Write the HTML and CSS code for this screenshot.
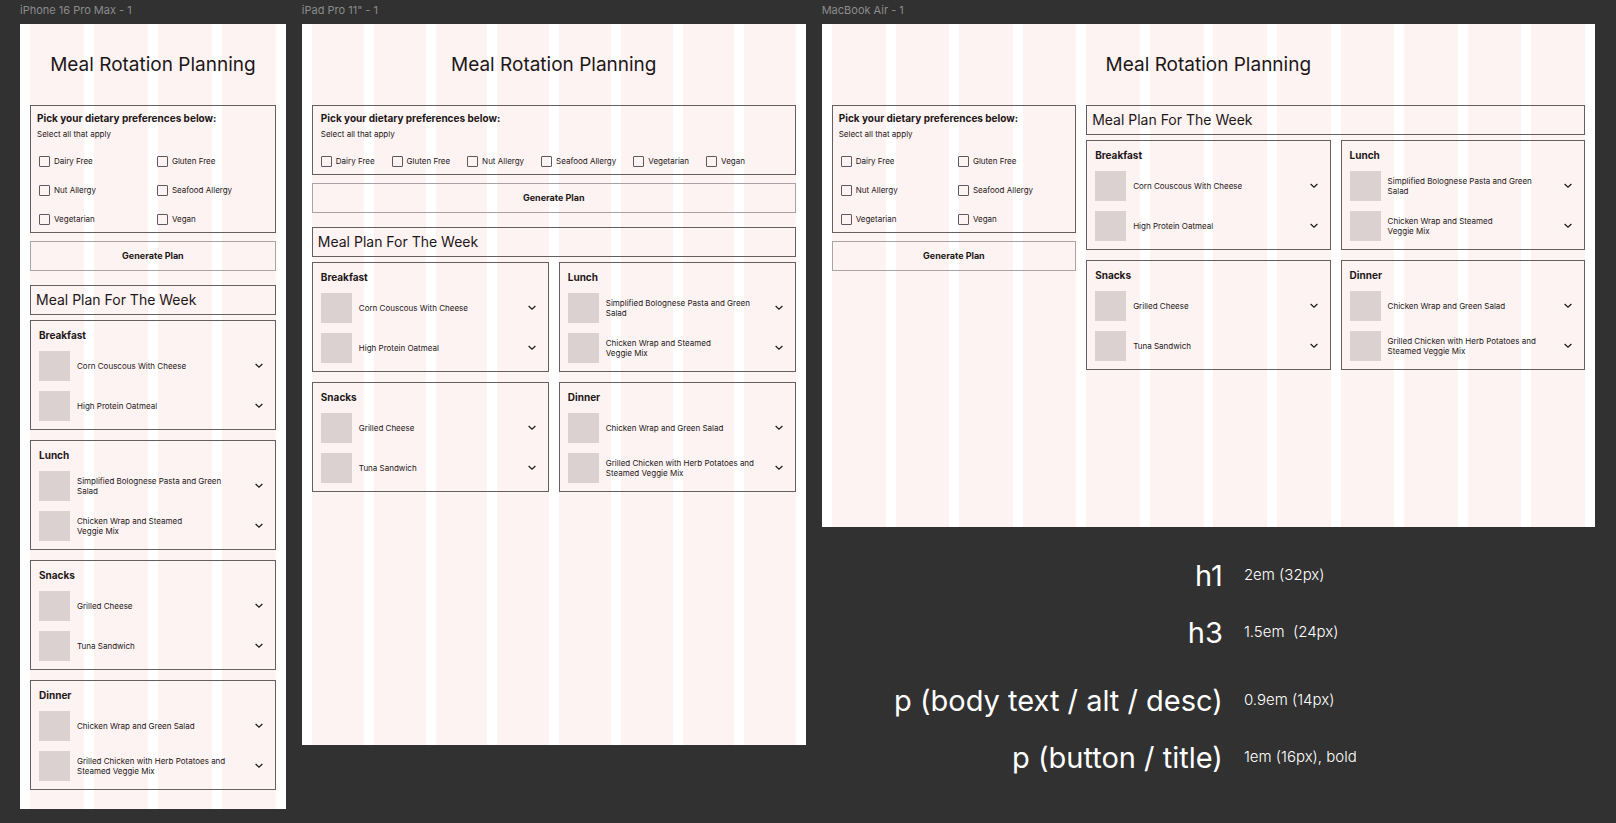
FILE: index.html
```html
<!DOCTYPE html>
<html lang="en">
<head>
<meta charset="utf-8">
<title>Meal Rotation Planning</title>
<link rel="stylesheet" href="styles.css">
</head>
<body>
<svg class="sprite" aria-hidden="true"><symbol id="chevron" viewBox="0 0 14 14"><path d="M3.6 5 7 8.2 10.4 5" fill="none" stroke="currentColor" stroke-width="1.2"/></symbol></svg>
<main class="canvas">
  <section class="artboard">
    <h2 class="artboard-name">iPhone 16 Pro Max - 1</h2>
    <div class="frame frame-phone">
      <h1 class="page-title">Meal Rotation Planning</h1>
      <div class="layout">
        <form class="planner">
          <fieldset class="preferences" aria-label="Dietary preferences">
            <p class="strong">Pick your dietary preferences below:</p>
            <p class="hint">Select all that apply</p>
            <div class="options">
              <label class="option"><input type="checkbox">Dairy Free</label>
              <label class="option"><input type="checkbox">Gluten Free</label>
              <label class="option"><input type="checkbox">Nut Allergy</label>
              <label class="option"><input type="checkbox">Seafood Allergy</label>
              <label class="option"><input type="checkbox">Vegetarian</label>
              <label class="option"><input type="checkbox">Vegan</label>
            </div>
          </fieldset>
          <button class="generate" type="button">Generate Plan</button>
        </form>
        <section class="plan">
          <h3 class="plan-title">Meal Plan For The Week</h3>
          <div class="meals">
            <article class="meal">
              <h4 class="strong">Breakfast</h4>
              <div class="dish"><span class="thumb"></span><p>Corn Couscous With Cheese</p><button class="expand" type="button" aria-label="Show dish"><svg><use href="#chevron"/></svg></button></div>
              <div class="dish"><span class="thumb"></span><p>High Protein Oatmeal</p><button class="expand" type="button" aria-label="Show dish"><svg><use href="#chevron"/></svg></button></div>
            </article>
            <article class="meal">
              <h4 class="strong">Lunch</h4>
              <div class="dish"><span class="thumb"></span><p>Simplified Bolognese Pasta and Green<br>Salad</p><button class="expand" type="button" aria-label="Show dish"><svg><use href="#chevron"/></svg></button></div>
              <div class="dish"><span class="thumb"></span><p>Chicken Wrap and Steamed<br>Veggie Mix</p><button class="expand" type="button" aria-label="Show dish"><svg><use href="#chevron"/></svg></button></div>
            </article>
            <article class="meal">
              <h4 class="strong">Snacks</h4>
              <div class="dish"><span class="thumb"></span><p>Grilled Cheese</p><button class="expand" type="button" aria-label="Show dish"><svg><use href="#chevron"/></svg></button></div>
              <div class="dish"><span class="thumb"></span><p>Tuna Sandwich</p><button class="expand" type="button" aria-label="Show dish"><svg><use href="#chevron"/></svg></button></div>
            </article>
            <article class="meal">
              <h4 class="strong">Dinner</h4>
              <div class="dish"><span class="thumb"></span><p>Chicken Wrap and Green Salad</p><button class="expand" type="button" aria-label="Show dish"><svg><use href="#chevron"/></svg></button></div>
              <div class="dish"><span class="thumb"></span><p>Grilled Chicken with Herb Potatoes and<br>Steamed Veggie Mix</p><button class="expand" type="button" aria-label="Show dish"><svg><use href="#chevron"/></svg></button></div>
            </article>
          </div>
        </section>
      </div>
    </div>
  </section>

  <section class="artboard">
    <h2 class="artboard-name">iPad Pro 11" - 1</h2>
    <div class="frame frame-tablet">
      <h1 class="page-title">Meal Rotation Planning</h1>
      <div class="layout">
        <form class="planner">
          <fieldset class="preferences" aria-label="Dietary preferences">
            <p class="strong">Pick your dietary preferences below:</p>
            <p class="hint">Select all that apply</p>
            <div class="options">
              <label class="option"><input type="checkbox">Dairy Free</label>
              <label class="option"><input type="checkbox">Gluten Free</label>
              <label class="option"><input type="checkbox">Nut Allergy</label>
              <label class="option"><input type="checkbox">Seafood Allergy</label>
              <label class="option"><input type="checkbox">Vegetarian</label>
              <label class="option"><input type="checkbox">Vegan</label>
            </div>
          </fieldset>
          <button class="generate" type="button">Generate Plan</button>
        </form>
        <section class="plan">
          <h3 class="plan-title">Meal Plan For The Week</h3>
          <div class="meals">
            <article class="meal">
              <h4 class="strong">Breakfast</h4>
              <div class="dish"><span class="thumb"></span><p>Corn Couscous With Cheese</p><button class="expand" type="button" aria-label="Show dish"><svg><use href="#chevron"/></svg></button></div>
              <div class="dish"><span class="thumb"></span><p>High Protein Oatmeal</p><button class="expand" type="button" aria-label="Show dish"><svg><use href="#chevron"/></svg></button></div>
            </article>
            <article class="meal">
              <h4 class="strong">Lunch</h4>
              <div class="dish"><span class="thumb"></span><p>Simplified Bolognese Pasta and Green<br>Salad</p><button class="expand" type="button" aria-label="Show dish"><svg><use href="#chevron"/></svg></button></div>
              <div class="dish"><span class="thumb"></span><p>Chicken Wrap and Steamed<br>Veggie Mix</p><button class="expand" type="button" aria-label="Show dish"><svg><use href="#chevron"/></svg></button></div>
            </article>
            <article class="meal">
              <h4 class="strong">Snacks</h4>
              <div class="dish"><span class="thumb"></span><p>Grilled Cheese</p><button class="expand" type="button" aria-label="Show dish"><svg><use href="#chevron"/></svg></button></div>
              <div class="dish"><span class="thumb"></span><p>Tuna Sandwich</p><button class="expand" type="button" aria-label="Show dish"><svg><use href="#chevron"/></svg></button></div>
            </article>
            <article class="meal">
              <h4 class="strong">Dinner</h4>
              <div class="dish"><span class="thumb"></span><p>Chicken Wrap and Green Salad</p><button class="expand" type="button" aria-label="Show dish"><svg><use href="#chevron"/></svg></button></div>
              <div class="dish"><span class="thumb"></span><p>Grilled Chicken with Herb Potatoes and<br>Steamed Veggie Mix</p><button class="expand" type="button" aria-label="Show dish"><svg><use href="#chevron"/></svg></button></div>
            </article>
          </div>
        </section>
      </div>
    </div>
  </section>

  <section class="artboard">
    <h2 class="artboard-name">MacBook Air - 1</h2>
    <div class="frame frame-laptop">
      <h1 class="page-title">Meal Rotation Planning</h1>
      <div class="layout">
        <form class="planner">
          <fieldset class="preferences" aria-label="Dietary preferences">
            <p class="strong">Pick your dietary preferences below:</p>
            <p class="hint">Select all that apply</p>
            <div class="options">
              <label class="option"><input type="checkbox">Dairy Free</label>
              <label class="option"><input type="checkbox">Gluten Free</label>
              <label class="option"><input type="checkbox">Nut Allergy</label>
              <label class="option"><input type="checkbox">Seafood Allergy</label>
              <label class="option"><input type="checkbox">Vegetarian</label>
              <label class="option"><input type="checkbox">Vegan</label>
            </div>
          </fieldset>
          <button class="generate" type="button">Generate Plan</button>
        </form>
        <section class="plan">
          <h3 class="plan-title">Meal Plan For The Week</h3>
          <div class="meals">
            <article class="meal">
              <h4 class="strong">Breakfast</h4>
              <div class="dish"><span class="thumb"></span><p>Corn Couscous With Cheese</p><button class="expand" type="button" aria-label="Show dish"><svg><use href="#chevron"/></svg></button></div>
              <div class="dish"><span class="thumb"></span><p>High Protein Oatmeal</p><button class="expand" type="button" aria-label="Show dish"><svg><use href="#chevron"/></svg></button></div>
            </article>
            <article class="meal">
              <h4 class="strong">Lunch</h4>
              <div class="dish"><span class="thumb"></span><p>Simplified Bolognese Pasta and Green<br>Salad</p><button class="expand" type="button" aria-label="Show dish"><svg><use href="#chevron"/></svg></button></div>
              <div class="dish"><span class="thumb"></span><p>Chicken Wrap and Steamed<br>Veggie Mix</p><button class="expand" type="button" aria-label="Show dish"><svg><use href="#chevron"/></svg></button></div>
            </article>
            <article class="meal">
              <h4 class="strong">Snacks</h4>
              <div class="dish"><span class="thumb"></span><p>Grilled Cheese</p><button class="expand" type="button" aria-label="Show dish"><svg><use href="#chevron"/></svg></button></div>
              <div class="dish"><span class="thumb"></span><p>Tuna Sandwich</p><button class="expand" type="button" aria-label="Show dish"><svg><use href="#chevron"/></svg></button></div>
            </article>
            <article class="meal">
              <h4 class="strong">Dinner</h4>
              <div class="dish"><span class="thumb"></span><p>Chicken Wrap and Green Salad</p><button class="expand" type="button" aria-label="Show dish"><svg><use href="#chevron"/></svg></button></div>
              <div class="dish"><span class="thumb"></span><p>Grilled Chicken with Herb Potatoes and<br>Steamed Veggie Mix</p><button class="expand" type="button" aria-label="Show dish"><svg><use href="#chevron"/></svg></button></div>
            </article>
          </div>
        </section>
      </div>
    </div>

    <div class="type-scale">
      <dl class="type-group">
        <dt>h1</dt><dd>2em (32px)</dd>
        <dt>h3</dt><dd>1.5em&nbsp; (24px)</dd>
      </dl>
      <dl class="type-group">
        <dt>p (body text / alt / desc)</dt><dd>0.9em (14px)</dd>
        <dt>p (button / title)</dt><dd>1em (16px), bold</dd>
      </dl>
    </div>
  </section>
</main>
</body>
</html>
```
FILE: styles.css
```css
* {
  box-sizing: border-box;
  margin: 0;
  padding: 0;
}

body {
  background: #313131;
  color: #1d1718;
  font-family: Inter, "Liberation Sans", sans-serif;
  font-size: 8px;
  line-height: 10px;
}

button {
  font: inherit;
  color: inherit;
  background: none;
  border: 0;
}

.sprite {
  display: none;
}

.canvas {
  display: grid;
  grid-template-columns: minmax(0, 440fr) minmax(0, 834fr) minmax(0, 1280fr);
  align-items: start;
  gap: 16px;
  padding: 0 21px 12px 20px;
}

.artboard {
  min-width: 0;
}

.artboard-name {
  padding: 3px 0 7px;
  font-size: 11px;
  line-height: 14px;
  font-weight: 400;
  color: #8c8c8c;
}

/* Frames show their layout columns behind the content */
.frame {
  --columns: 4;
  --step: calc((100% + 10px) / var(--columns));
  padding: 0 10px;
  background:
    repeating-linear-gradient(
      to right,
      #fdf3f2 0,
      #fdf3f2 calc(var(--step) - 10px),
      #fff calc(var(--step) - 10px),
      #fff var(--step)
    ) content-box,
    linear-gradient(#fff, #fff) border-box;
}

.frame-phone .layout {
  padding-bottom: 19px;
}

.frame-tablet {
  --columns: 8;
  aspect-ratio: 834 / 1194;
}

.frame-laptop {
  --columns: 12;
  aspect-ratio: 1280 / 832;
}

.page-title {
  padding: 29px 0 28px;
  font-size: 19px;
  line-height: 24px;
  font-weight: 400;
  text-align: center;
}

.layout {
  display: grid;
  gap: 14px;
}

.planner {
  display: grid;
  gap: 8px;
  align-content: start;
}

.strong {
  font-size: 10px;
  line-height: 12px;
  font-weight: 700;
}

.preferences {
  min-width: 0;
  border: 1px solid #655f62;
  padding: 6px 0 7px 6px;
}

.hint {
  padding: 5px 0 17px;
}

.options {
  display: grid;
  grid-template-columns: repeat(2, minmax(0, 1fr));
  row-gap: 18px;
  padding-left: 2px;
}

.option {
  display: flex;
  align-items: center;
  gap: 4px;
  line-height: 11px;
}

.option input {
  appearance: none;
  width: 11px;
  height: 11px;
  border: 1px solid #5f585e;
  border-radius: 1px;
}

.generate {
  height: 30px;
  border: 1px solid #aaa2a7;
  font-size: 9px;
  font-weight: 700;
}

.plan-title {
  border: 1px solid #655f62;
  padding: 5px;
  font-size: 14px;
  line-height: 18px;
  font-weight: 400;
}

.meals {
  display: grid;
  gap: 10px;
  margin-top: 5px;
}

.meal {
  display: grid;
  gap: 10px;
  padding: 8px 9px 8px 8px;
  border: 1px solid #655f62;
}

.dish {
  display: flex;
  align-items: center;
  gap: 7px;
}

.dish p {
  flex: 1;
}

.thumb {
  width: 31px;
  height: 30px;
  background: #dbd1d0;
}

.expand {
  width: 14px;
  height: 14px;
}

.expand svg {
  display: block;
  width: 14px;
  height: 14px;
}

.frame-tablet .meals,
.frame-laptop .meals {
  grid-template-columns: repeat(2, minmax(0, 1fr));
}

.frame-tablet .preferences {
  padding-left: 8px;
}

.frame-tablet .options {
  display: flex;
  gap: 17px;
  padding-left: 0;
}

.frame-laptop .layout {
  grid-template-columns: repeat(12, minmax(0, 1fr));
  gap: 10px;
}

.frame-laptop .planner {
  grid-column: span 4;
}

.frame-laptop .plan {
  grid-column: span 8;
}

.type-scale {
  display: grid;
  gap: 33px;
  padding-top: 31px;
  color: #fff;
}

.type-group {
  display: grid;
  grid-template-columns: 8fr 7fr;
  align-items: center;
  gap: 22px 21px;
}

.type-group dt {
  font-size: 29px;
  line-height: 35px;
  font-weight: 400;
  text-align: right;
  white-space: nowrap;
}

.type-group dd {
  font-size: 15px;
  line-height: 18px;
  font-weight: 300;
}
```
